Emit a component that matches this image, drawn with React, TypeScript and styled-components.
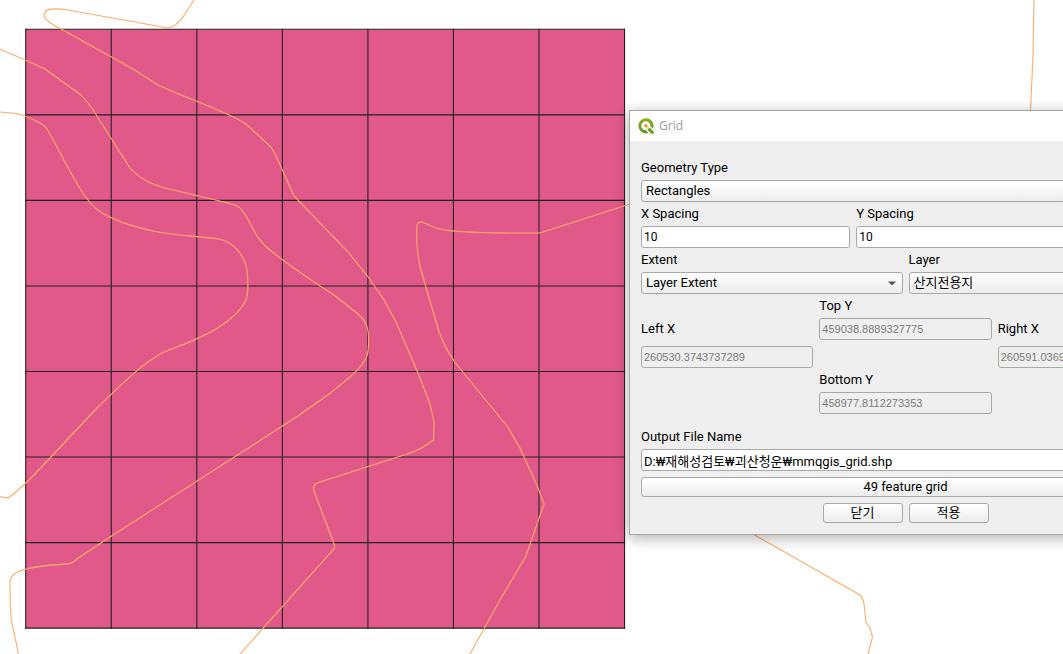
import React from 'react';
import styled, { createGlobalStyle, css } from 'styled-components';

const GlobalStyle = createGlobalStyle`
  *, *::before, *::after { box-sizing: border-box; }
  body { margin: 0; background: #fff; }
`;

const uiFont = `Roboto, 'Noto Sans CJK KR', sans-serif`;
const numberFont = `'Liberation Sans', sans-serif`;

const Desktop = styled.main`
  position: relative;
  height: 100vh;
  overflow: hidden;
  background: #fff;
  color: #000;
  font: 13px/12px ${uiFont};
`;

const MapCanvas = styled.svg`
  display: block;
  width: 100%;
  height: 100%;
`;

const DialogWindow = styled.section`
  position: absolute;
  left: 629px;
  top: 110px;
  width: 553px;
  border: 1px solid #a6a6a6;
  background: #efefef;
  box-shadow: 0 3px 14px rgba(0, 0, 0, 0.32);
`;

const TitleBar = styled.header`
  display: flex;
  align-items: center;
  gap: 5px;
  height: 30px;
  padding: 0 8px;
  background: #fff;
`;

const Title = styled.h1`
  margin: 0;
  color: #999;
  font: 400 12px/16px 'Open Sans', sans-serif;
`;

const Form = styled.form`
  display: flex;
  flex-direction: column;
  gap: 6px;
  padding: 21px 11px 11px;
`;

const Columns = styled.div<{ $template: string }>`
  display: grid;
  grid-template-columns: ${(p) => p.$template};
  gap: 6px;
`;

const Field = styled.div<{ $spaced?: boolean }>`
  display: flex;
  flex-direction: column;
  gap: 6px;
  min-width: 0;
  margin-top: ${(p) => (p.$spaced ? '11px' : '0')};
`;

const Label = styled.label`
  height: 12px;
  white-space: nowrap;
`;

const frame = css`
  border: 1px solid #a9a9a9;
  border-radius: 3px;
  color: #000;
  font: 13px/16px ${uiFont};
`;

const TextInput = styled.input<{ $numeric?: boolean }>`
  ${frame}
  width: 100%;
  height: 22px;
  padding: 0 2px;
  background: #fff;
  ${(p) => p.$numeric && `font: 12px/16px ${uiFont};`}

  &:disabled {
    background: #efefef;
    color: #7b7b7b;
    font: 11px/16px ${numberFont};
  }
`;

const SelectBox = styled.div`
  display: grid;
  align-items: center;

  & > * { grid-area: 1 / 1; }
`;

const Select = styled.select`
  ${frame}
  appearance: none;
  width: 100%;
  height: 22px;
  padding: 0 20px 0 4px;
  background: linear-gradient(#fff, #ededed);
`;

const Arrow = styled.svg`
  justify-self: end;
  margin-right: 7px;
  pointer-events: none;
`;

const PushButton = styled.button`
  ${frame}
  min-width: 80px;
  height: 20px;
  padding: 0 6px;
  background: linear-gradient(#fff, #ededed);
`;

const ButtonRow = styled.footer`
  display: flex;
  justify-content: center;
  gap: 6px;
`;

const ExtentGrid = styled.div`
  display: grid;
  grid-template-columns: repeat(3, minmax(0, 1fr));
  grid-template-rows: 12px 22px 22px 12px 22px;
  grid-template-areas:
    '. topLabel .'
    'leftLabel top rightLabel'
    'left . right'
    '. bottomLabel .'
    '. bottom .';
  align-items: center;
  gap: 6px;
`;

const ExtentLabel = styled(Label)<{ $area: string }>`
  grid-area: ${(p) => p.$area};
`;

const ExtentInput = styled(TextInput)<{ $area: string }>`
  grid-area: ${(p) => p.$area};
`;

const cell = 85.55;
const originX = 25.7;
const originY = 29.3;
const steps = [0, 1, 2, 3, 4, 5, 6, 7];

const contours = [
  'M194 0 C188 9 179 27 168 28 L68 10 C54 8 45 8 44 15 C44 19 52 25 61 29 L133 69 L158 85 C178 95 229 112 246 124 L271 147 C278 158 289 186 294 196 L348 252 L369 278 L384 300 L396 322 L418 373 L430 404 L434 422 L433.500 440 C427 445 417 451 407 454 L317 483 C313 486 313 488 314 491 L334.500 545 Q335 548 333 550 L240 654',
  'M0 49 L45 69 L81 95 Q91 106 95 113 L130 168 C141 180 152 184 165 188 L228 203 Q239 206 241 209 L246 216 L257 236 L265 246 C289 266 312 281 334 295 L358 314 Q367 322 368 331 C369 337 369 349 367 356 C362 369 345 381 329 394 L298 416 L110 537 L77 559 Q73 563 68 564 C52 565 31 566 17 572 Q11 576 10 581 C10 595 10 614 12 623 L18.500 654',
  'M0 112 L17 113.500 C28 117 42 122 47 129 C56 144 74 181 85 196 Q93 207 99 211 C116 222 139 228 153 231 C177 236 199 236 219 239 C233 242 244 254 247 270 C248 280 249 292 246 300 C242 309 230 321 219 327 C205 337 184 344 162 353 C140 365 119 387 97 408 L35 474 Q15 494 8 498 Q4 498 0 496.500',
  'M630 204 L540 233 C516 233 452 234 436 228 L422 222 Q416 222 417 228 C416 240 418 260 421 270 L439 332 Q447 354 462 371 L502 420 L507 426 L520 448 L538 488 L544 504 L526 556 L500 600 L470 654',
  'M753 534 L860 595 Q863 598 864 604 L866 622 L870 628 L872.500 637 L868 654',
  'M1034 0 L1033 55 L1030.500 111',
];

function ContourMap() {
  const end = cell * 7;
  return (
    <MapCanvas role="img" aria-label="Contours and grid">
      <rect x={originX} y={originY} width={end} height={end} fill="#e15989" />
      <g stroke="#232323" strokeWidth="1.1" strokeLinecap="square">
        {steps.map((n) => (
          <React.Fragment key={n}>
            <line x1={originX + n * cell} x2={originX + n * cell} y1={originY} y2={originY + end} />
            <line x1={originX} x2={originX + end} y1={originY + n * cell} y2={originY + n * cell} />
          </React.Fragment>
        ))}
      </g>
      <g fill="none" stroke="#fdac69" strokeWidth="1.1">
        {contours.map((d) => (
          <path key={d} d={d} />
        ))}
      </g>
    </MapCanvas>
  );
}

function QgisLogo() {
  return (
    <svg width="16" height="16" viewBox="0 0 16 16" aria-hidden="true">
      <defs>
        <linearGradient id="ring" x1="0" y1="0" x2="0" y2="1">
          <stop offset="0" stopColor="#93b023" />
          <stop offset="1" stopColor="#589632" />
        </linearGradient>
      </defs>
      <path
        fill="url(#ring)"
        fillRule="evenodd"
        d="M7.800 .2a7.600 7.600 0 1 0 2.600 14.800L8.300 12.300A4.500 4.500 0 1 1 12.300 8.300l2.700 2.400A7.600 7.600 0 0 0 7.800 .2Z"
      />
      <path fill="#6aa52c" d="M10 10h2.200l3.700 3.700v2h-2.700L10 12.400Z" />
      <path fill="#f3dc8a" d="M7 8.800l1.900-1.700 2.800 2.700-1.900 1.900Z" />
      <circle cx="7.800" cy="7.600" r="1.600" fill="#f08a3c" />
    </svg>
  );
}

function Combo({ id, value }: { id: string; value: string }) {
  return (
    <SelectBox>
      <Select id={id} defaultValue={value}>
        <option>{value}</option>
      </Select>
      <Arrow width="8" height="5" viewBox="0 0 8 5" aria-hidden="true">
        <path d="M0 .5h8L4 4.500Z" fill="#555" />
      </Arrow>
    </SelectBox>
  );
}

const extents = [
  { area: 'top', label: 'Top Y', value: '459038.8889327775' },
  { area: 'left', label: 'Left X', value: '260530.3743737289' },
  { area: 'right', label: 'Right X', value: '260591.0369' },
  { area: 'bottom', label: 'Bottom Y', value: '458977.8112273353' },
];

export default function App() {
  return (
    <Desktop>
      <GlobalStyle />
      <ContourMap />
      <DialogWindow role="dialog" aria-labelledby="dialog-title">
        <TitleBar>
          <QgisLogo />
          <Title id="dialog-title">Grid</Title>
        </TitleBar>
        <Form onSubmit={(e) => e.preventDefault()}>
          <Field>
            <Label htmlFor="geometry">Geometry Type</Label>
            <Combo id="geometry" value="Rectangles" />
          </Field>
          <Columns $template="2fr 3fr">
            <Field>
              <Label htmlFor="x-spacing">X Spacing</Label>
              <TextInput id="x-spacing" defaultValue="10" $numeric />
            </Field>
            <Field>
              <Label htmlFor="y-spacing">Y Spacing</Label>
              <TextInput id="y-spacing" defaultValue="10" $numeric />
            </Field>
          </Columns>
          <Columns $template="1fr 1fr">
            <Field>
              <Label htmlFor="extent">Extent</Label>
              <Combo id="extent" value="Layer Extent" />
            </Field>
            <Field>
              <Label htmlFor="layer">Layer</Label>
              <Combo id="layer" value="산지전용지" />
            </Field>
          </Columns>
          <ExtentGrid>
            {extents.map((e) => (
              <React.Fragment key={e.area}>
                <ExtentLabel $area={`${e.area}Label`} htmlFor={e.area}>
                  {e.label}
                </ExtentLabel>
                <ExtentInput $area={e.area} id={e.area} defaultValue={e.value} disabled />
              </React.Fragment>
            ))}
          </ExtentGrid>
          <Field $spaced>
            <Label htmlFor="output">Output File Name</Label>
            <TextInput id="output" defaultValue="D:₩재해성검토₩괴산청운₩mmqgis_grid.shp" />
          </Field>
          <PushButton type="button">49 feature grid</PushButton>
          <ButtonRow>
            <PushButton type="button">닫기</PushButton>
            <PushButton type="submit">적용</PushButton>
          </ButtonRow>
        </Form>
      </DialogWindow>
    </Desktop>
  );
}
